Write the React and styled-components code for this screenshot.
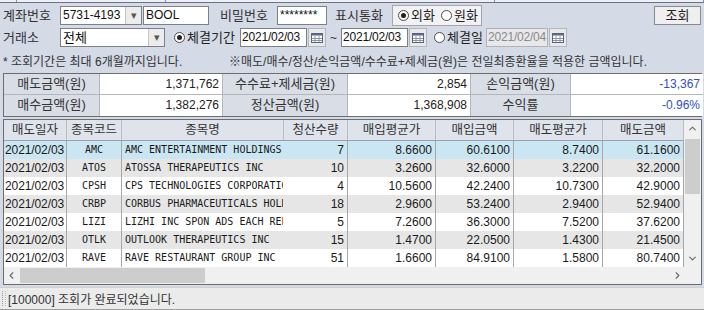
import React from "react";
import styled, { createGlobalStyle } from "styled-components";
import { ChevronUp, ChevronDown, ChevronLeft, ChevronRight } from "lucide-react";

const rows = [
  { date: "2021/02/03", code: "AMC", name: "AMC ENTERTAINMENT HOLDINGS", qty: 7, buyAvg: "8.6600", buyAmt: "60.6100", sellAvg: "8.7400", sellAmt: "61.1600" },
  { date: "2021/02/03", code: "ATOS", name: "ATOSSA THERAPEUTICS INC", qty: 10, buyAvg: "3.2600", buyAmt: "32.6000", sellAvg: "3.2200", sellAmt: "32.2000" },
  { date: "2021/02/03", code: "CPSH", name: "CPS TECHNOLOGIES CORPORATION", qty: 4, buyAvg: "10.5600", buyAmt: "42.2400", sellAvg: "10.7300", sellAmt: "42.9000" },
  { date: "2021/02/03", code: "CRBP", name: "CORBUS PHARMACEUTICALS HOLDINGS", qty: 18, buyAvg: "2.9600", buyAmt: "53.2400", sellAvg: "2.9400", sellAmt: "52.9400" },
  { date: "2021/02/03", code: "LIZI", name: "LIZHI INC SPON ADS EACH REP", qty: 5, buyAvg: "7.2600", buyAmt: "36.3000", sellAvg: "7.5200", sellAmt: "37.6200" },
  { date: "2021/02/03", code: "OTLK", name: "OUTLOOK THERAPEUTICS INC", qty: 15, buyAvg: "1.4700", buyAmt: "22.0500", sellAvg: "1.4300", sellAmt: "21.4500" },
  { date: "2021/02/03", code: "RAVE", name: "RAVE RESTAURANT GROUP INC", qty: 51, buyAvg: "1.6600", buyAmt: "84.9100", sellAvg: "1.5800", sellAmt: "80.7400" },
];

const columns = "63px 55px 162px 64px 88px 78px 89px 81px";

const CalendarIcon = () => (
  <svg width="12" height="10" viewBox="0 0 12 10">
    <rect x="0.5" y="0.5" width="11" height="9" fill="#fff" stroke="#5a6680" />
    <rect x="0.5" y="0.5" width="11" height="2" fill="#5a6680" />
    <path d="M4 3v6M8 3v6M1 5.5h10M1 7.5h10" stroke="#8a94a8" strokeWidth="1" />
  </svg>
);

export default function App() {
  return (
    <>
      <GlobalStyle />
      <Page>
        <TopStrip>
          <StripCell $w={16} />
          <StripCell $w={149} />
          <StripCell $w={330} />
          <StripCell $w={209} />
        </TopStrip>

        <FormRow>
          <Label $w={57}>계좌번호</Label>
          <Combo $w={82}>
            <ComboText>5731-4193</ComboText>
            <ComboArrow>▾</ComboArrow>
          </Combo>
          <TextBox $w={66} $ml={1}>BOOL</TextBox>
          <Label $w={57} $ml={11}>비밀번호</Label>
          <TextBox $w={50}>********</TextBox>
          <Label $w={57} $ml={8}>표시통화</Label>
          <RadioGroup>
            <Radio>
              <RadioDot $on />
              외화
            </Radio>
            <Radio>
              <RadioDot />
              원화
            </Radio>
          </RadioGroup>
          <Spacer />
          <Button>조회</Button>
        </FormRow>

        <FormRow>
          <Label $w={57}>거래소</Label>
          <Combo $w={105}>
            <ComboText $kr>전체</ComboText>
            <ComboArrow>▾</ComboArrow>
          </Combo>
          <Radio $w={66} $ml={9}>
            <RadioDot $on />
            체결기간
          </Radio>
          <DateBox $w={86}>
            <DateText>2021/02/03</DateText>
            <CalBtn>
              <CalendarIcon />
            </CalBtn>
          </DateBox>
          <Tilde>~</Tilde>
          <DateBox $w={86}>
            <DateText>2021/02/03</DateText>
            <CalBtn>
              <CalendarIcon />
            </CalBtn>
          </DateBox>
          <Radio $w={52} $ml={7}>
            <RadioDot />
            체결일
          </Radio>
          <DateBox $w={81}>
            <DateText $disabled>2021/02/04</DateText>
            <CalBtn>
              <CalendarIcon />
            </CalBtn>
          </DateBox>
        </FormRow>

        <NoteRow>
          <NoteText $w={226}>* 조회기간은 최대 6개월까지입니다.</NoteText>
          <NoteText>※매도/매수/정산/손익금액/수수료+제세금(원)은 전일최종환율을 적용한 금액입니다.</NoteText>
        </NoteRow>

        <Summary>
          <SumLabel>매도금액(원)</SumLabel>
          <SumValue>1,371,762</SumValue>
          <SumLabel>수수료+제세금(원)</SumLabel>
          <SumValue>2,854</SumValue>
          <SumLabel>손익금액(원)</SumLabel>
          <SumValue $blue $last>-13,367</SumValue>
          <SumLabel $bottom>매수금액(원)</SumLabel>
          <SumValue $bottom>1,382,276</SumValue>
          <SumLabel $bottom>정산금액(원)</SumLabel>
          <SumValue $bottom>1,368,908</SumValue>
          <SumLabel $bottom>수익률</SumLabel>
          <SumValue $blue $last $bottom>-0.96%</SumValue>
        </Summary>

        <GridBox>
          <GridBody>
            <GridTable>
              <HeadRow>
                <HeadCell>매도일자</HeadCell>
                <HeadCell>종목코드</HeadCell>
                <HeadCell>종목명</HeadCell>
                <HeadCell>청산수량</HeadCell>
                <HeadCell>매입평균가</HeadCell>
                <HeadCell>매입금액</HeadCell>
                <HeadCell>매도평균가</HeadCell>
                <HeadCell>매도금액</HeadCell>
              </HeadRow>
              {rows.map((r, i) => (
                <DataRow key={r.code} $tone={i === 0 ? "sel" : i % 2 ? "gray" : "white"}>
                  <Cell $tight>{r.date}</Cell>
                  <Cell $align="center" $mono>{r.code}</Cell>
                  <Cell $mono $noline>{r.name}</Cell>
                  <Cell $align="right">{r.qty}</Cell>
                  <Cell $align="right">{r.buyAvg}</Cell>
                  <Cell $align="right">{r.buyAmt}</Cell>
                  <Cell $align="right">{r.sellAvg}</Cell>
                  <Cell $align="right">{r.sellAmt}</Cell>
                </DataRow>
              ))}
            </GridTable>
            <VScroll>
              <ScrollArrow>
                <ChevronUp size={11} strokeWidth={2.5} />
              </ScrollArrow>
              <VThumb />
              <Spacer />
              <ScrollArrow>
                <ChevronDown size={11} strokeWidth={2.5} />
              </ScrollArrow>
            </VScroll>
          </GridBody>
          <HScroll>
            <ScrollArrow $h>
              <ChevronLeft size={11} strokeWidth={2.5} />
            </ScrollArrow>
            <HThumb />
            <Spacer />
            <ScrollArrow $h>
              <ChevronRight size={11} strokeWidth={2.5} />
            </ScrollArrow>
            <Corner />
          </HScroll>
        </GridBox>

        <StatusBar>
          <Gripper />
          <StatusText>[100000] 조회가 완료되었습니다.</StatusText>
        </StatusBar>
      </Page>
    </>
  );
}

const GlobalStyle = createGlobalStyle`
  html, body {
    margin: 0;
    padding: 0;
    background: #d4dae6;
    overflow: hidden;
  }
  body {
    font-family: "Liberation Sans", "Noto Sans CJK KR", sans-serif;
    font-size: 12px;
    color: #2a2a2a;
  }
`;

const Page = styled.div`
  width: 704px;
  height: 310px;
  display: flex;
  flex-direction: column;
`;

const TopStrip = styled.div`
  display: flex;
  height: 2px;
  border-bottom: 1px solid #6c7388;
  margin-bottom: 2px;
`;

const StripCell = styled.div`
  width: ${(p) => p.$w}px;
  background: #eef0f5;
  border-right: 1px solid #8a90a0;
`;

const FormRow = styled.div`
  display: flex;
  align-items: center;
  height: 22px;
  padding: 0 3px;
`;

const Label = styled.div`
  width: ${(p) => p.$w}px;
  flex-shrink: 0;
  margin-left: ${(p) => p.$ml || 0}px;
  font-size: 13px;
  color: #333;
  white-space: nowrap;
  line-height: 19px;
`;

const Combo = styled.div`
  width: ${(p) => p.$w}px;
  flex-shrink: 0;
  height: 19px;
  box-sizing: border-box;
  border: 1px solid #7b7f88;
  background: #fff;
  display: flex;
  align-items: stretch;
`;

const ComboText = styled.div`
  flex: 1;
  min-width: 0;
  padding-left: 2px;
  font-size: ${(p) => (p.$kr ? 13 : 12)}px;
  line-height: 17px;
  color: #111;
  white-space: nowrap;
  overflow: hidden;
`;

const ComboArrow = styled.div`
  width: 15px;
  flex-shrink: 0;
  background: #ececec;
  border-left: 1px solid #c6c6c6;
  color: #555;
  font-size: 11px;
  display: flex;
  align-items: center;
  justify-content: center;
`;

const TextBox = styled.div`
  width: ${(p) => p.$w}px;
  flex-shrink: 0;
  margin-left: ${(p) => p.$ml || 0}px;
  height: 19px;
  box-sizing: border-box;
  border: 1px solid #7b7f88;
  background: #fff;
  padding-left: 2px;
  line-height: 17px;
  font-size: 12px;
  color: #111;
  overflow: hidden;
  white-space: nowrap;
`;

const RadioGroup = styled.div`
  width: 90px;
  flex-shrink: 0;
  height: 21px;
  box-sizing: border-box;
  border: 1px solid #a3a6ad;
  background: #f2f2f4;
  display: flex;
  align-items: center;
  gap: 6px;
  padding-left: 5px;
`;

const Radio = styled.div`
  width: ${(p) => (p.$w ? `${p.$w}px` : "auto")};
  flex-shrink: 0;
  margin-left: ${(p) => p.$ml || 0}px;
  display: flex;
  align-items: center;
  gap: 2px;
  font-size: 13px;
  color: #222;
  white-space: nowrap;
  line-height: 19px;
`;

const RadioDot = styled.span`
  width: 11px;
  height: 11px;
  box-sizing: border-box;
  border-radius: 50%;
  border: 1px solid #4a4a4a;
  background: #fff;
  display: inline-flex;
  align-items: center;
  justify-content: center;

  &::after {
    content: "";
    width: 5px;
    height: 5px;
    border-radius: 50%;
    background: ${(p) => (p.$on ? "#222" : "transparent")};
  }
`;

const Spacer = styled.div`
  flex: 1;
`;

const Button = styled.div`
  width: 47px;
  height: 19px;
  box-sizing: border-box;
  border: 1px solid #8a8a8a;
  background: #efefef;
  text-align: center;
  font-size: 13px;
  line-height: 17px;
  color: #222;
`;

const DateBox = styled.div`
  width: ${(p) => p.$w}px;
  flex-shrink: 0;
  height: 19px;
  display: flex;
  align-items: stretch;
  gap: 1px;
`;

const DateText = styled.div`
  flex: 1;
  min-width: 0;
  box-sizing: border-box;
  border: 1px solid ${(p) => (p.$disabled ? "#b0b3ba" : "#7b7f88")};
  background: ${(p) => (p.$disabled ? "#e8e8ea" : "#fff")};
  color: ${(p) => (p.$disabled ? "#8a8a8a" : "#111")};
  font-size: 12px;
  letter-spacing: -0.2px;
  line-height: 17px;
  padding-left: 1px;
  white-space: nowrap;
  overflow: hidden;
`;

const CalBtn = styled.div`
  width: 18px;
  flex-shrink: 0;
  box-sizing: border-box;
  border: 1px solid #b4b7be;
  background: #e9e9ec;
  display: flex;
  align-items: center;
  justify-content: center;
`;

const Tilde = styled.div`
  width: 15px;
  flex-shrink: 0;
  text-align: center;
  font-size: 12px;
  color: #333;
`;

const NoteRow = styled.div`
  display: flex;
  align-items: center;
  height: 20px;
  margin-top: 2px;
  padding-left: 3px;
`;

const NoteText = styled.div`
  width: ${(p) => (p.$w ? `${p.$w}px` : "auto")};
  flex-shrink: 0;
  font-size: 12px;
  color: #333;
  white-space: nowrap;
`;

const Summary = styled.div`
  margin: 2px 2px 0 3px;
  display: grid;
  grid-template-columns: 96px 123px 125px 123px 100px 132px;
  grid-auto-rows: 21px;
  border-top: 1px solid #6d6d6d;
  border-bottom: 1px solid #6d6d6d;
  border-left: 1px solid #6d6d6d;
`;

const SumLabel = styled.div`
  background: #d8dde6;
  text-align: center;
  font-size: 13px;
  line-height: 20px;
  color: #333;
  border-right: 1px solid #b3b6bd;
  border-bottom: ${(p) => (p.$bottom ? "none" : "1px solid #b3b6bd")};
  white-space: nowrap;
`;

const SumValue = styled.div`
  background: #fff;
  text-align: right;
  padding-right: 3px;
  font-size: 12px;
  line-height: 20px;
  color: ${(p) => (p.$blue ? "#2f4fc4" : "#222")};
  border-right: ${(p) => (p.$last ? "none" : "1px solid #b3b6bd")};
  border-bottom: ${(p) => (p.$bottom ? "none" : "1px solid #b3b6bd")};
`;

const GridBox = styled.div`
  margin: 2px 2px 0 3px;
  height: 167px;
  box-sizing: border-box;
  border: 1px solid #6d6d6d;
  background: #fff;
  display: flex;
  flex-direction: column;
`;

const GridBody = styled.div`
  display: flex;
  height: 147px;
`;

const GridTable = styled.div`
  width: 680px;
  display: flex;
  flex-direction: column;
`;

const HeadRow = styled.div`
  display: grid;
  grid-template-columns: ${columns};
  height: 21px;
  background: #dfe3eb;
  border-bottom: 1px solid #9aa0ab;
  box-sizing: border-box;
`;

const HeadCell = styled.div`
  text-align: center;
  font-size: 12.5px;
  line-height: 20px;
  color: #333;
  border-right: 1px solid #b8bcc6;
  white-space: nowrap;
  overflow: hidden;
`;

const rowBg = { sel: "#c9e6f2", gray: "#e6e6e6", white: "#fff" };

const DataRow = styled.div`
  display: grid;
  grid-template-columns: ${columns};
  height: 18px;
  background: ${(p) => rowBg[p.$tone]};
`;

const Cell = styled.div`
  text-align: ${(p) => p.$align || "left"};
  padding: ${(p) =>
    p.$tight ? "0 0 0 1px" : p.$align === "center" ? "0" : p.$align === "right" ? "0 3px 0 0" : "0 0 0 3px"};
  font-family: ${(p) =>
    p.$mono ? `"DejaVu Sans Mono", "Liberation Mono", monospace` : `"Liberation Sans", sans-serif`};
  font-size: ${(p) => (p.$mono ? 10 : 12)}px;
  letter-spacing: ${(p) => (p.$tight ? "-0.1px" : "0")};
  line-height: 18px;
  color: #1a1a1a;
  white-space: nowrap;
  overflow: hidden;
  border-right: ${(p) => (p.$noline ? "1px solid transparent" : "1px solid #a8a8a8")};
`;

const VScroll = styled.div`
  width: 17px;
  background: #f0f0f0;
  display: flex;
  flex-direction: column;
`;

const ScrollArrow = styled.div`
  width: ${(p) => (p.$h ? "14px" : "17px")};
  height: 17px;
  display: flex;
  align-items: center;
  justify-content: center;
  color: #6a6a6a;
`;

const VThumb = styled.div`
  margin: 2px 1px 0;
  height: 55px;
  background: #cdcdcd;
`;

const HScroll = styled.div`
  flex: 1;
  display: flex;
  align-items: stretch;
  background: #f0f0f0;
`;

const HThumb = styled.div`
  width: 185px;
  margin: 1px 0 1px 2px;
  background: #cdcdcd;
`;

const Corner = styled.div`
  width: 17px;
  background: #f0f0f0;
`;

const StatusBar = styled.div`
  margin-top: 2px;
  height: 23px;
  box-sizing: border-box;
  background: #ebebeb;
  border-top: 1px solid #d0d0d0;
  border-bottom: 1px solid #9e9e9e;
  display: flex;
  align-items: center;
  padding-left: 2px;
`;

const Gripper = styled.div`
  width: 2px;
  height: 15px;
  border-left: 1px dotted #9a9a9a;
  border-right: 1px dotted #bcbcbc;
  margin-right: 2px;
`;

const StatusText = styled.div`
  font-size: 12px;
  color: #333;
  white-space: nowrap;
`;
